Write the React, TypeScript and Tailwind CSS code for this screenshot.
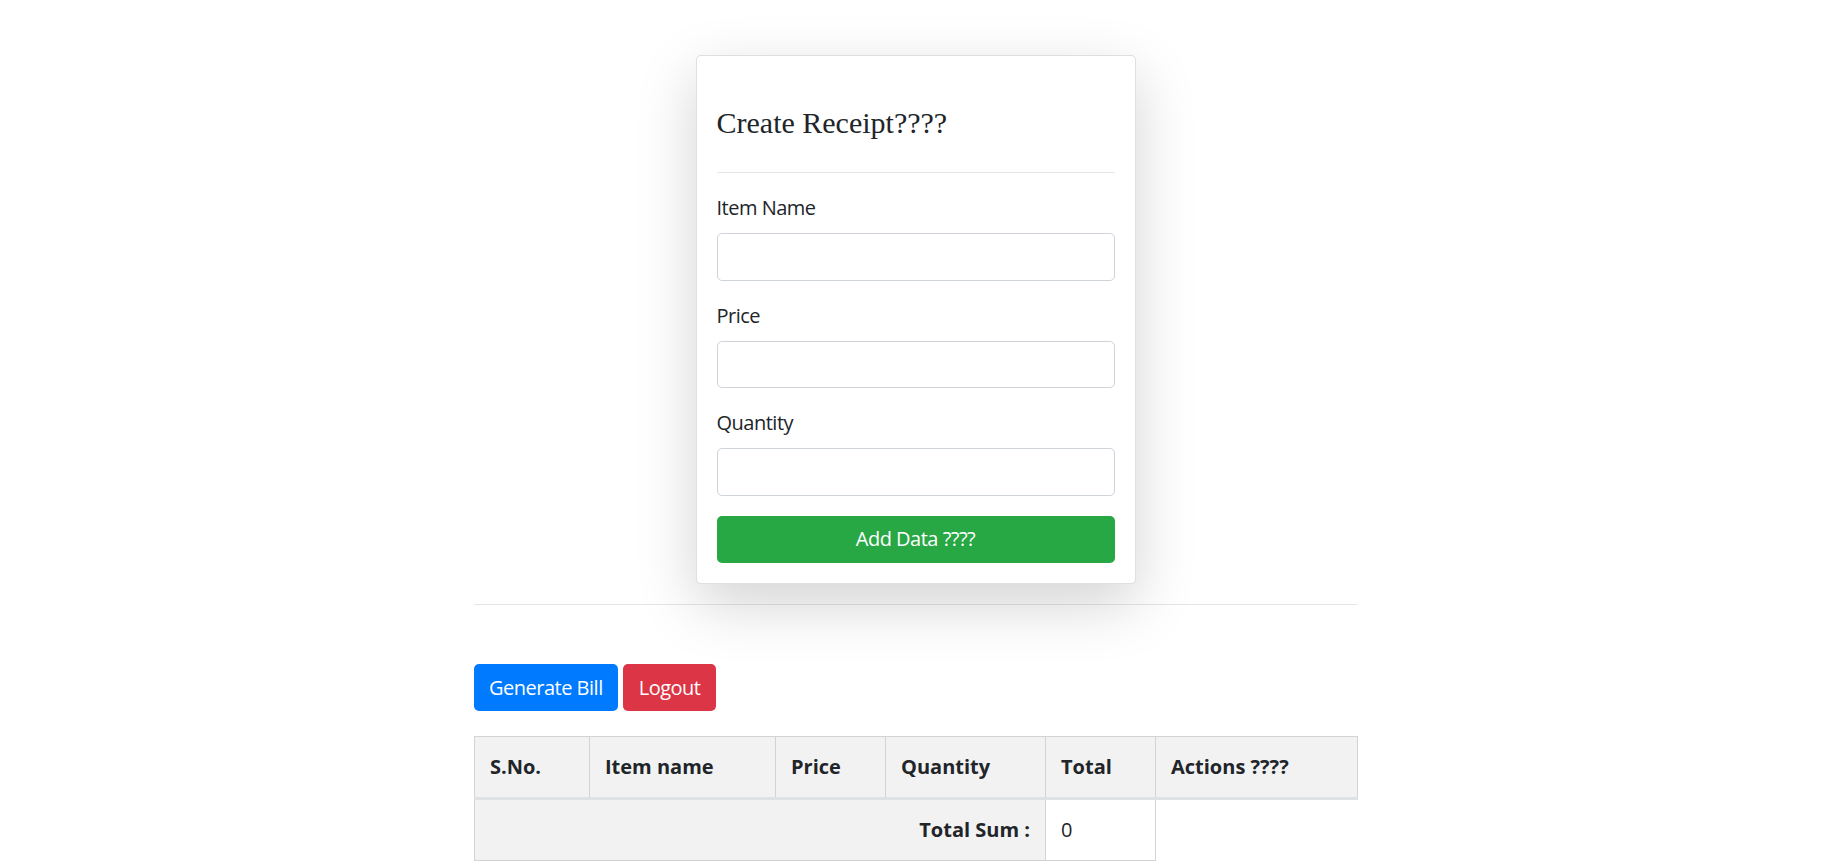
import React from "react";

const FIELDS = ["Item Name", "Price", "Quantity"];

const COLUMNS = [
  { label: "S.No.", w: "w-[115px]" },
  { label: "Item name", w: "w-[186px]" },
  { label: "Price", w: "w-[110px]" },
  { label: "Quantity", w: "w-[160px]" },
  { label: "Total", w: "w-[110px]" },
  { label: "Actions ????", w: "w-[202px]" },
];

const TH_CLS =
  "border border-[#d3d3d3] border-b-[3px] border-b-[#dee2e6] bg-[#f2f2f2] px-[15px] py-[15px] text-left font-bold leading-[30px]";

export default function App() {
  return (
    <div className="min-h-screen bg-white font-['Open_Sans',sans-serif] text-[20px] leading-[30px] text-[#212529]">
      <div className="mx-auto w-[883px] pt-[55px] pb-[20px]">

        {/* ── Receipt card ─────────────────────────────────────── */}
        <div className="mx-auto w-[440px] rounded-[5px] border border-black/[0.125] bg-white px-[20px] pt-[20px] pb-[20px] shadow-[0_20px_60px_rgba(0,0,0,0.175)]">
          <h4 className="mt-[29px] font-['Liberation_Serif',serif] text-[30px] leading-[36px] text-[#212529]">
            Create Receipt????
          </h4>
          <hr className="mt-[31px] mb-[20px] border-t border-black/10" />

          {FIELDS.map(label => (
            <div key={label} className="mb-[20px]">
              <label className="mb-[10px] block tracking-[-0.5px]">{label}</label>
              <input
                type="text"
                className="block h-[47.5px] w-full rounded-[5px] border border-[#ced4da] bg-white px-[15px] focus:outline-none"
              />
            </div>
          ))}

          <button className="mt-[1px] block h-[47.5px] w-full rounded-[5px] bg-[#28a745] tracking-[-0.5px] text-white">
            Add Data ????
          </button>
        </div>

        <hr className="mt-[20px] border-t border-black/10" />

        {/* ── Actions ──────────────────────────────────────────── */}
        <div className="mt-[59px] flex gap-[5px] tracking-[-0.5px]">
          <button className="h-[47px] rounded-[5px] bg-[#007bff] px-[15px] text-white">Generate Bill</button>
          <button className="h-[47px] rounded-[5px] bg-[#dc3545] px-[16px] text-white">Logout</button>
        </div>

        {/* ── Bill table ───────────────────────────────────────── */}
        <table className="mt-[25px] w-[883px] table-fixed border-collapse">
          <thead>
            <tr>
              {COLUMNS.map(c => (
                <th key={c.label} className={`${TH_CLS} ${c.w}`}>{c.label}</th>
              ))}
            </tr>
          </thead>
          <tbody>
            <tr>
              <td colSpan={4} className="border border-[#d3d3d3] bg-[#f2f2f2] px-[15px] py-[15px] text-right font-bold">
                Total Sum :
              </td>
              <td className="border border-[#d3d3d3] bg-white px-[15px] py-[15px]">0</td>
            </tr>
          </tbody>
        </table>
      </div>
    </div>
  );
}
